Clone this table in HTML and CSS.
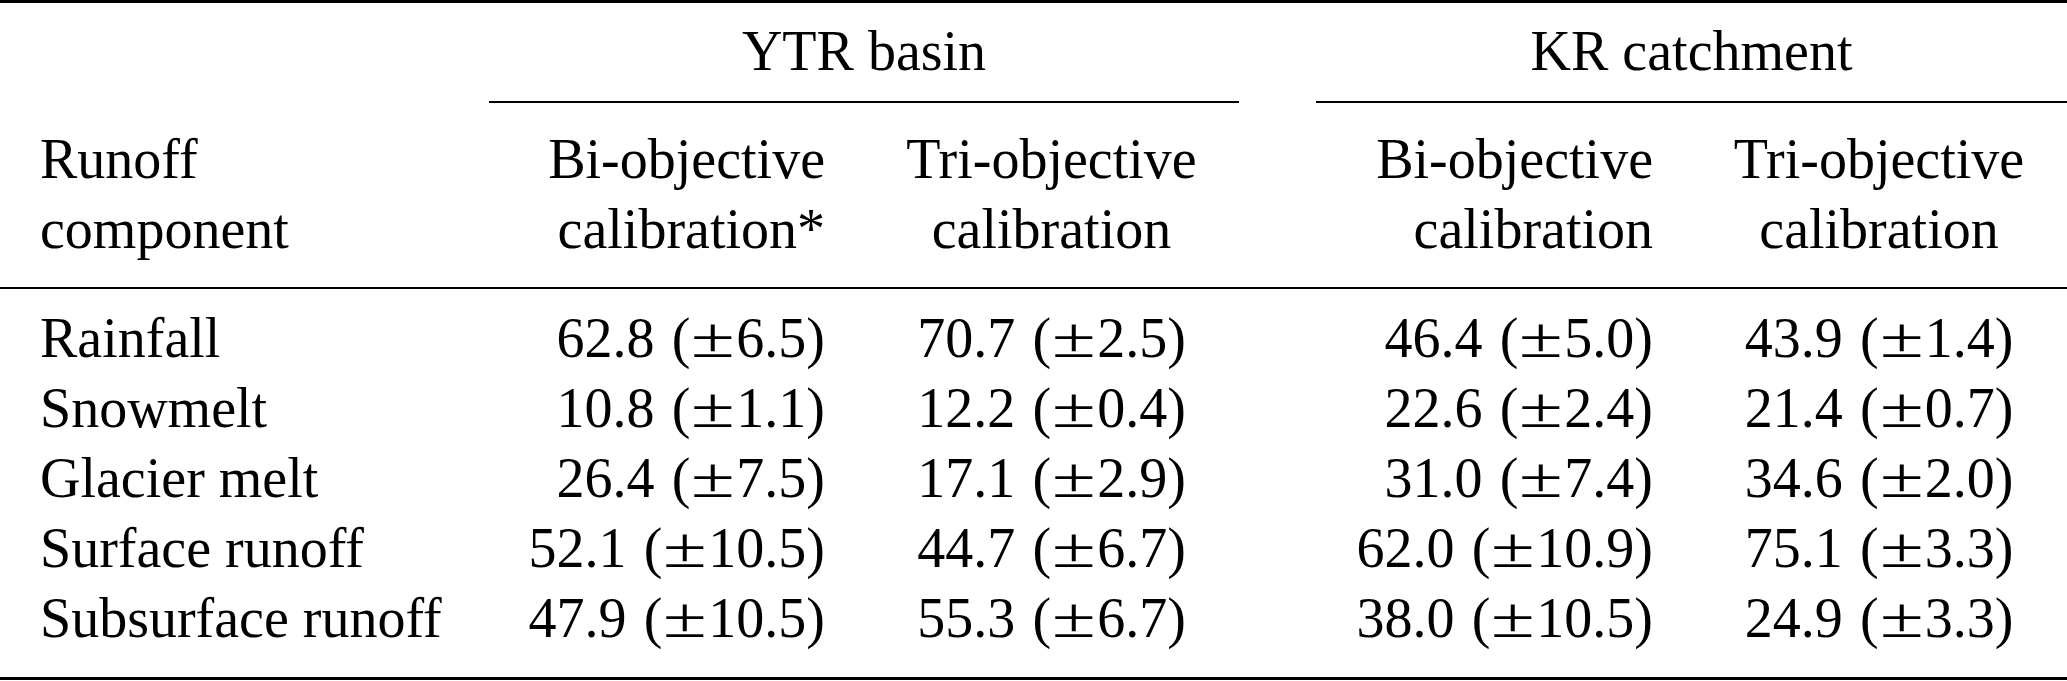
FILE: index.html
```html
<!DOCTYPE html>
<html lang="en">
<head>
<meta charset="utf-8">
<title>Runoff components</title>
<link rel="stylesheet" href="styles.css">
</head>
<body>
<table class="results">
  <colgroup>
    <col class="c-label">
    <col class="c-data">
    <col class="c-data">
    <col class="c-gap">
    <col class="c-data">
    <col class="c-last">
  </colgroup>
  <thead>
    <tr class="group-row">
      <th class="blank"></th>
      <th class="group" colspan="2">YTR basin</th>
      <th class="blank"></th>
      <th class="group" colspan="2">KR catchment</th>
    </tr>
    <tr class="head-row">
      <th class="label">Runoff<br>component</th>
      <th class="num-r">Bi-objective<br>calibration*</th>
      <th class="num-c">Tri-objective<br>calibration</th>
      <th></th>
      <th class="num-r kr">Bi-objective<br>calibration</th>
      <th class="num-c">Tri-objective<br>calibration</th>
    </tr>
  </thead>
  <tbody>
    <tr class="first">
      <td class="label">Rainfall</td>
      <td class="num-r val">62.8 (<span class="pm">±</span>6.5)</td>
      <td class="num-c val">70.7 (<span class="pm">±</span>2.5)</td>
      <td></td>
      <td class="num-r kr val">46.4 (<span class="pm">±</span>5.0)</td>
      <td class="num-c val">43.9 (<span class="pm">±</span>1.4)</td>
    </tr>
    <tr>
      <td class="label">Snowmelt</td>
      <td class="num-r val">10.8 (<span class="pm">±</span>1.1)</td>
      <td class="num-c val">12.2 (<span class="pm">±</span>0.4)</td>
      <td></td>
      <td class="num-r kr val">22.6 (<span class="pm">±</span>2.4)</td>
      <td class="num-c val">21.4 (<span class="pm">±</span>0.7)</td>
    </tr>
    <tr>
      <td class="label">Glacier melt</td>
      <td class="num-r val">26.4 (<span class="pm">±</span>7.5)</td>
      <td class="num-c val">17.1 (<span class="pm">±</span>2.9)</td>
      <td></td>
      <td class="num-r kr val">31.0 (<span class="pm">±</span>7.4)</td>
      <td class="num-c val">34.6 (<span class="pm">±</span>2.0)</td>
    </tr>
    <tr>
      <td class="label">Surface runoff</td>
      <td class="num-r val">52.1 (<span class="pm">±</span>10.5)</td>
      <td class="num-c val">44.7 (<span class="pm">±</span>6.7)</td>
      <td></td>
      <td class="num-r kr val">62.0 (<span class="pm">±</span>10.9)</td>
      <td class="num-c val">75.1 (<span class="pm">±</span>3.3)</td>
    </tr>
    <tr class="last">
      <td class="label">Subsurface runoff</td>
      <td class="num-r val">47.9 (<span class="pm">±</span>10.5)</td>
      <td class="num-c val">55.3 (<span class="pm">±</span>6.7)</td>
      <td></td>
      <td class="num-r kr val">38.0 (<span class="pm">±</span>10.5)</td>
      <td class="num-c val">24.9 (<span class="pm">±</span>3.3)</td>
    </tr>
  </tbody>
</table>
</body>
</html>
```
FILE: styles.css
```css
html, body {
  margin: 0;
  padding: 0;
  background: #ffffff;
}

.results {
  width: 2067px;
  table-layout: fixed;
  border-collapse: separate;
  border-spacing: 0;
  border-top: 3px solid #000;
  font-family: "Liberation Serif", "Times New Roman", serif;
  font-size: 56px;
  line-height: 70px;
  color: #000;
}

.c-label { width: 489px; }
.c-data { width: 375px; }
.c-gap { width: 77px; }
.c-last { width: 376px; }

.results th,
.results td {
  padding: 0;
  font-weight: normal;
  vertical-align: top;
  white-space: nowrap;
}

/* group header row */
.group-row th {
  padding-top: 13px;
  padding-bottom: 15px;
  border-bottom: 2px solid transparent;
  text-align: center;
}
.group-row th.group {
  border-bottom-color: #000;
}

/* column header row */
.head-row th {
  padding-top: 21px;
  padding-bottom: 23px;
  border-bottom: 2px solid #000;
}

.label {
  text-align: left;
  padding-left: 40px !important;
}

.num-r {
  text-align: right;
  padding-right: 39px !important;
}
.num-r.kr {
  padding-right: 38px !important;
}

.num-c {
  text-align: center;
}

.val {
  word-spacing: 0.06em;
}

.pm {
  display: inline-block;
  width: 0.82em;
  text-align: center;
  transform: scaleX(1.42);
}

tbody tr.first td {
  padding-top: 14px;
}
tbody tr.last td {
  padding-bottom: 24px;
  border-bottom: 3px solid #000;
}
```
